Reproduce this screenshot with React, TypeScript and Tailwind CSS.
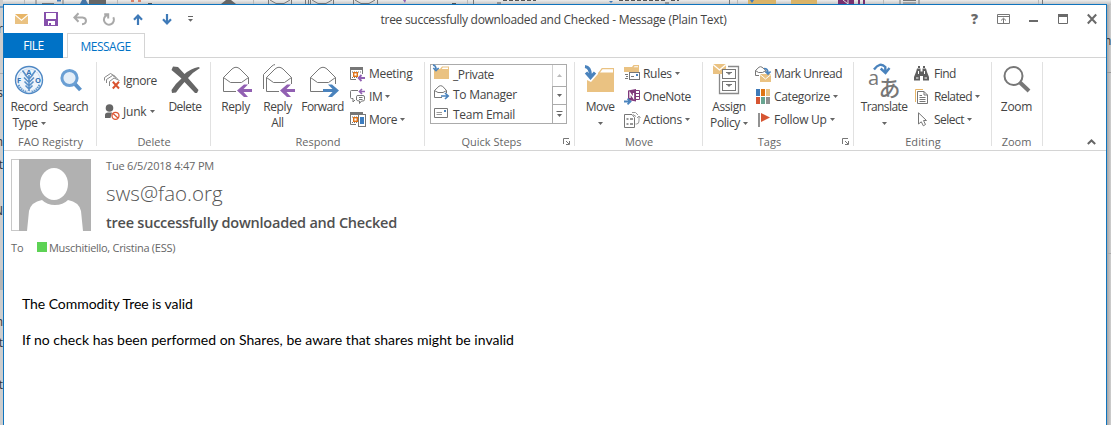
import React, { type ReactNode } from "react";
import clsx from "clsx";

const BLUE = "#4a83bd";
const PURPLE = "#9160b2";
const GRAY = "#777777";
const TAN = "#eac282";

function Icon({ w, h, className, children }: { w: number; h: number; className?: string; children: ReactNode }) {
  return (
    <svg width={w} height={h} viewBox={`0 0 ${w} ${h}`} fill="none" className={clsx("block shrink-0 overflow-visible", className)}>
      {children}
    </svg>
  );
}

function Caret({ className }: { className?: string }) {
  return (
    <Icon w={5} h={3} className={className}>
      <path d="M0 0H5L2.5 3Z" fill="#666" />
    </Icon>
  );
}

function Group({ width, label, labelClass, launcher, children }: { width: string; label: string; labelClass?: string; launcher?: boolean; children: ReactNode }) {
  return (
    <section className={clsx("relative flex h-full shrink-0 flex-col", width)}>
      <div className="flex h-[77px] items-start pt-1">{children}</div>
      <div className={clsx("text-center text-[11px] leading-[14px] text-[#666]", labelClass)}>{label}</div>
      {launcher && (
        <Icon w={7} h={7} className="absolute right-[5px] bottom-[5px]">
          <path d="M.5 6V.5H6M3 3L6 6M6.5 3V6.5H3" stroke={GRAY} />
        </Icon>
      )}
      <div className="absolute top-1 right-0 h-[84px] w-px bg-[#e1e1e1]" />
    </section>
  );
}

function Big({ width, icon, label, second, caret, tracking }: { width: string; icon: ReactNode; label: string; second?: string; caret?: boolean; tracking: string }) {
  return (
    <button className={clsx("flex shrink-0 flex-col items-center whitespace-nowrap text-[12px] leading-4 text-[#444]", width, tracking)}>
      <span className="flex h-[37px] items-start justify-center">{icon}</span>
      <span>{label}</span>
      {(second || caret) && (
        <span className="flex h-4 items-center gap-[3px]">
          {second}
          {caret && <Caret />}
        </span>
      )}
    </button>
  );
}

function Small({ icon, label, caret, tracking, height = "h-[23px]" }: { icon: ReactNode; label: string; caret?: boolean; tracking: string; height?: string }) {
  return (
    <button className={clsx("flex shrink-0 items-center whitespace-nowrap text-[12px] leading-4 text-[#444]", height)}>
      <span className="flex w-[19px] shrink-0 items-center">{icon}</span>
      <span className={tracking}>{label}</span>
      {caret && <Caret className="ml-[3px]" />}
    </button>
  );
}

function Envelope({ x = 0 }: { x?: number }) {
  return (
    <g transform={`translate(${x} 0)`} stroke={GRAY} strokeWidth="1">
      <path d="M.5 12.5L9 4Q13 .5 17 4L25.5 12.5V19M.5 12.5V26.5H13M.5 12.5L7.5 17.5H18.5L25.5 12.5" />
    </g>
  );
}

function LeftArrow({ x }: { x: number }) {
  return <path transform={`translate(${x} 0)`} d="M8 19.5H12L7.5 24H16V27H7.5L12 32H8L1 25.5Z" fill={PURPLE} />;
}

function FaoLogo() {
  return (
    <Icon w={30} h={32}>
      <circle cx="15" cy="18" r="13.5" stroke="#4f88c4" strokeWidth="1.4" fill="#eef4fb" />
      <circle cx="15" cy="18" r="11" stroke="#8fb6de" strokeWidth=".8" strokeDasharray="1 1" />
      <path d="M15 13V29M15 17L11 12.5M15 17L19 12.5M15 20.5L10 15.5M15 20.5L20 15.5M15 24L10.5 19.5M15 24L19.5 19.5M15 27L11.5 23.5M15 27L18.5 23.5M8.5 8.5L12.5 14M21.5 8.5L17.5 14" stroke="#5a90c8" strokeWidth="1.6" />
      <text x="3" y="20.5" fontSize="7.5" fontWeight="700" fill="#3674b5" fontFamily="Open Sans">F</text>
      <text x="12.3" y="12.5" fontSize="7.5" fontWeight="700" fill="#3674b5" fontFamily="Open Sans">A</text>
      <text x="21" y="20.5" fontSize="7.5" fontWeight="700" fill="#3674b5" fontFamily="Open Sans">O</text>
      <path d="M4.5 23Q8 29.5 13 30M25.5 23Q22 29.5 17 30" stroke="#5f95cb" strokeWidth="2" strokeDasharray="1.4 .8" />
    </Icon>
  );
}

function CalendarGlyph() {
  return (
    <>
      <path d="M0 0H13V3H0Z" fill={GRAY} />
      <path d="M.5 3V12.5H6M12.5 3V7" stroke={GRAY} />
      <path d="M2 5H12M2 10.5H8" stroke={GRAY} strokeDasharray="1 1" />
      <rect x="3.7" y="5.7" width="3.6" height="3.6" stroke="#e07318" strokeWidth="1.4" />
    </>
  );
}

function MiniEnvelope() {
  return <path d="M.5 5.5L5 1.2Q6.5 .2 8.5 1.2L12.5 5.5V8M.5 5.5V12.5H8M.5 5.5L4 7.5H9L12.5 5.5" stroke={GRAY} />;
}

function QuickAccess() {
  return (
    <div className="flex items-center pl-[11px]">
      <Icon w={13} h={10}>
        <path d="M0 0H13L6.5 5.5Z" fill="#e8b566" />
        <path d="M0 1.6L6.5 7L13 1.6V10H0Z" fill={TAN} />
      </Icon>
      <Icon w={14} h={14} className="ml-4">
        <path fillRule="evenodd" d="M0 0H14V14H0ZM2 1V7H12V1ZM4 9V13H5V11H7V13H11V9Z" fill="#8650ab" />
      </Icon>
      <Icon w={14} h={12} className="ml-[15px]">
        <path d="M5.5 .2L1.4 4.5L5.5 8.8M1.5 4.5H9.5Q13 4.8 13 8Q12.7 11 9 11.2" stroke="#a9a9a9" strokeWidth="2" />
      </Icon>
      <Icon w={13} h={13} className="ml-[15px]">
        <path d="M5 2A5 5 0 1 0 11.3 4.2M2.2 1.2H6.2V5.5" stroke="#a9a9a9" strokeWidth="2" />
      </Icon>
      <Icon w={10} h={11} className="ml-[18px]">
        <path d="M5 11V1.5M1 5.8L5 1.6L9 5.8" stroke="#3f7ab8" strokeWidth="2.2" />
      </Icon>
      <Icon w={10} h={11} className="ml-[19px]">
        <path d="M5 0V9.5M1 5.2L5 9.4L9 5.2" stroke="#3f7ab8" strokeWidth="2.2" />
      </Icon>
      <Icon w={5} h={6} className="ml-4">
        <path d="M0 .5H5" stroke="#666" />
        <path d="M0 3H5L2.5 5.7Z" fill="#666" />
      </Icon>
    </div>
  );
}

function WindowButtons() {
  return (
    <div className="flex items-center pr-[9px]">
      <span className="mr-[19px] text-[14px] leading-4 font-extrabold text-[#6a6a6a]">?</span>
      <Icon w={13} h={10} className="mr-[19px]">
        <path d="M.5 .5H12.5V9.5H.5ZM.5 2.5H12.5M6.5 9V4.5M4 6.5L6.5 4.2L9 6.5" stroke="#777" />
      </Icon>
      <Icon w={9} h={10} className="mr-5">
        <path d="M0 7H9" stroke="#6a6a6a" strokeWidth="2" />
      </Icon>
      <Icon w={10} h={10} className="mr-[19px]">
        <path d="M.5 1V9.5H9.5V1" stroke="#6a6a6a" />
        <path d="M0 0H10V3H0Z" fill="#6a6a6a" />
      </Icon>
      <Icon w={10} h={10}>
        <path d="M.8 .5L9.2 9.5M9.2 .5L.8 9.5" stroke="#6a6a6a" strokeWidth="2" />
      </Icon>
    </div>
  );
}

function Gallery() {
  return (
    <div className="mt-[2px] ml-[5px] flex h-[60px] w-[137px] border border-[#ababab]">
      <div className="flex flex-1 flex-col pl-[2px]">
        <Small height="h-5" label="_Private" tracking="ml-[1px] tracking-[-0.4px]" icon={
          <Icon w={16} h={14} className="-mt-[6px]">
            <path d="M1 4H7L9 1.5H16V14H1Z" fill={TAN} />
            <path d="M9.8 2.5H15V4H8.7Z" fill="#fff" />
            <path d="M0 0Q3 .5 3 4M.3 3L3 5.6L5.7 3" stroke={BLUE} strokeWidth="1.6" />
          </Icon>
        } />
        <Small height="h-[19px]" label="To Manager" tracking="ml-[1px] tracking-[-0.27px]" icon={
          <Icon w={16} h={14} className="-mt-[5px] ml-[1px]">
            <MiniEnvelope />
            <path d="M7 11H14M11 8L14.2 11L11 14" stroke={BLUE} strokeWidth="1.7" />
          </Icon>
        } />
        <Small height="h-[21px]" label="Team Email" tracking="ml-[1px] tracking-[-0.27px]" icon={
          <Icon w={14} h={10} className="-mt-[4px] ml-[1px]">
            <path d="M.5 .5H13.5V9.5H.5Z" stroke={GRAY} />
            <path d="M2.5 4.5H8M2.5 6.5H8" stroke="#999" />
            <path d="M10 2H12V4H10Z" fill={BLUE} />
          </Icon>
        } />
      </div>
      <div className="flex w-[14px] flex-col">
        <span className="flex h-[21px] items-center justify-center border-l border-[#d0d0d0]">
          <Icon w={5} h={3}><path d="M0 3H5L2.5 0Z" fill="#bbb" /></Icon>
        </span>
        <span className="flex h-[19px] items-center justify-center border-y border-l border-[#ababab]"><Caret /></span>
        <span className="flex h-[18px] items-center justify-center border-l border-[#ababab]">
          <Icon w={5} h={6}>
            <path d="M-.5 .5H5.5" stroke="#666" />
            <path d="M0 3H5L2.5 6Z" fill="#666" />
          </Icon>
        </span>
      </div>
    </div>
  );
}

function Ribbon() {
  return (
    <div className="relative flex h-[93px] border-b border-[#d4d4d4]">
      <Group width="w-[93px]" label="FAO Registry">
        <div className="ml-[5px] flex">
          <Big width="w-10" label="Record" second="Type" caret tracking="tracking-[-0.4px]" icon={<FaoLogo />} />
          <Big width="w-[43px]" label="Search" tracking="tracking-[-0.5px]" icon={
            <Icon w={22} h={32}>
              <path d="M14 21L20.5 28" stroke="#5a92ca" strokeWidth="4" />
              <circle cx="9.5" cy="16" r="7.6" stroke="#6a9fd4" strokeWidth="3" fill="#e4eef8" />
            </Icon>
          } />
        </div>
      </Group>

      <Group width="w-[114px]" label="Delete">
        <div className="ml-[7px] flex w-[58px] shrink-0 flex-col pt-[3px]">
          <Small height="h-[31px]" label="Ignore" tracking="tracking-[-0.35px]" icon={
            <Icon w={16} h={16}>
              <path d="M.5 7.5V4.5L6.5 .5L11.5 3.5M2.5 10V6.5L8.5 2.5L13.5 5.5M5.5 13V8.5L10 5L15.5 7.5" stroke="#888" />
              <path d="M8.8 8.8L15 15.5M15 8.8L8.8 15.5" stroke="#d9532f" strokeWidth="2" />
            </Icon>
          } />
          <Small height="h-[31px]" label="Junk" caret tracking="mr-[1px] tracking-[-0.2px]" icon={
            <Icon w={16} h={16}>
              <circle cx="5.5" cy="4" r="3.8" fill="#666" />
              <path d="M1 14V11Q1 8.5 4 8.5H8L6.5 14Z" fill="#666" />
              <circle cx="11.5" cy="11.8" r="3.5" stroke="#dd5836" strokeWidth="1.3" fill="#fff" />
              <path d="M9 9.5L14 14" stroke="#dd5836" strokeWidth="1.3" />
            </Icon>
          } />
        </div>
        <Big width="w-[46px]" label="Delete" tracking="tracking-[-0.5px]" icon={
          <Icon w={29} h={32}>
            <path d="M2 4.5L7 5L13.5 12Q20 6.5 27.5 5L29 6Q22 10 17 16L27.5 28L26 31H24L13.5 20Q8 26 5 30.5L1 31L.5 28Q5 21 10.5 16.5L.5 8Z" fill="#666" />
          </Icon>
        } />
      </Group>

      <Group width="w-[214px]" label="Respond">
        <div className="ml-[3px] flex">
          <Big width="w-[43px]" label="Reply" tracking="tracking-[-0.4px]" icon={<Icon w={26} h={32} className="mt-[3px]"><Envelope /><LeftArrow x={13} /></Icon>} />
          <Big width="w-[41px]" label="Reply" second="All" tracking="tracking-[-0.4px]" icon={
            <Icon w={30} h={32} className="mt-[3px]">
              <path d="M.5 24V9.5L9 1Q10.5 -.3 12 -.4" stroke={GRAY} />
              <Envelope x={3} />
              <LeftArrow x={16} />
            </Icon>
          } />
          <Big width="w-[49px]" label="Forward" tracking="tracking-[-0.6px]" icon={
            <Icon w={26} h={32} className="mt-[3px]">
              <Envelope />
              <path d="M22 19.5H18L22.5 24H13V27H22.5L18 32H22L29 25.5Z" fill={BLUE} />
            </Icon>
          } />
        </div>
        <div className="ml-[3px] flex shrink-0 flex-col">
          <Small label="Meeting" tracking="tracking-[-0.3px]" icon={
            <Icon w={15} h={14}>
              <CalendarGlyph />
              <path d="M15 11H9M11.5 8L8.6 11L11.5 14" stroke={PURPLE} strokeWidth="1.8" />
            </Icon>
          } />
          <Small label="IM" caret tracking="tracking-[-0.4px]" icon={
            <Icon w={15} h={15}>
              <path d="M8 1.5H1.5Q.5 1.5 .5 2.5V8.5Q.5 9.5 1.5 9.5H3V13L5 11M6.5 11V7.5Q6.5 6.5 8 6.5H13Q14.5 6.5 14.5 8V10.5Q14.5 12 13 12H11.5L9.5 14.5V12Q6.5 12 6.5 10.5M9 8.5H12.5M9 10.5H12.5" stroke={GRAY} />
              <path d="M15 2.5H10M12 0L9.5 2.5L12 5" stroke={PURPLE} strokeWidth="1.6" />
            </Icon>
          } />
          <Small label="More" caret tracking="tracking-[-0.4px]" icon={
            <Icon w={16} h={15}>
              <CalendarGlyph />
              <rect x="8.5" y="2.5" width="7" height="12" stroke={GRAY} fill="#fff" />
              <path d="M10 5H14V12H10Z" fill="#3c7dc0" />
            </Icon>
          } />
        </div>
      </Group>

      <Group width="w-[150px]" label="Quick Steps" labelClass="pr-[17px]" launcher>
        <Gallery />
      </Group>

      <Group width="w-[128px]" label="Move">
        <Big width="ml-[5px] w-[40px]" label="Move" caret tracking="tracking-[-0.5px]" icon={
          <Icon w={29} h={31} className="-ml-[2px]">
            <path d="M2 18L6 20L13 12V10.5H13.5L16.8 6H29V30H2Z" fill={TAN} />
            <path d="M15 10.5L17.5 7.2H28V10.5Z" fill="#fff" />
            <path d="M0 4.5Q5.5 5 5.5 14M1 10.5L5.5 15.5L10 10.5" stroke={BLUE} strokeWidth="3.2" />
          </Icon>
        } />
        <div className="ml-1 flex shrink-0 flex-col">
          <Small label="Rules" caret tracking="tracking-[-0.3px]" icon={
            <Icon w={16} h={15} className="-mt-[3px]">
              <path d="M0 2H8L9.5 0H15V7H0Z" fill={TAN} />
              <path d="M10.5 1.2H14V2.2H9.7Z" fill="#fff" />
              <rect x="5.5" y="7.5" width="10" height="7" fill="#fff" stroke={GRAY} />
              <path d="M1 9.5H4M2 11.5H4M1 13.5H4M7 11.5H10" stroke={GRAY} />
              <path d="M12 9H14V11H12Z" fill={BLUE} />
            </Icon>
          } />
          <Small label="OneNote" tracking="tracking-[-0.4px]" icon={
            <Icon w={16} h={16}>
              <path d="M4 1.5L12 0V12.5L4 11Z" fill="#80397b" />
              <path d="M12 1.5H15.5V10.5H12M12 4.5H15M12 7.5H15" stroke="#80397b" />
              <path d="M6 9V4L9.5 9V4" stroke="#fff" strokeWidth="1.3" />
              <path d="M0 12.5H6M3.5 9.7L6.5 12.5L3.5 15.3" stroke={BLUE} strokeWidth="1.8" />
            </Icon>
          } />
          <Small label="Actions" caret tracking="tracking-[-0.3px]" icon={
            <Icon w={16} h={16}>
              <path d="M.5 2.5H8L10.5 5.5V15.5H.5Z" stroke={GRAY} fill="#fff" />
              <path d="M2.5 7H4.5M6 7H9M2.5 12H4.5M6 12H9" stroke={GRAY} strokeWidth="1.6" />
              <path d="M8 .5H11.5L14 3M9 2.5L12 4.5M11.5 12H12.5Q15 12 15 9V4.5M13 6L15 4L16.5 6" stroke="#999" />
            </Icon>
          } />
        </div>
      </Group>

      <Group width="w-[151px]" label="Tags" labelClass="pr-[18px]" launcher>
        <Big width="ml-[3px] w-[46px]" label="Assign" second="Policy" caret tracking="tracking-[-0.4px]" icon={
          <Icon w={32} h={32} className="-ml-[1px]">
            <path d="M0 2H13V12H0Z" fill={TAN} />
            <path d="M0 2.5L6.5 8L13 2.5" stroke="#fff" strokeWidth="1.3" />
            <path d="M6.5 12V31.5H25.5V4.5H15" stroke="#8a8a8a" strokeWidth="1.3" />
            <rect x="9.5" y="7.5" width="13" height="9" stroke="#777" fill="#fff" />
            <rect x="9.5" y="19.5" width="13" height="9" stroke="#777" fill="#fff" />
            <path d="M13 10.5H19M13 22.5H19" stroke="#777" />
            <path d="M14 11H18L16 13ZM14 23H18L16 25Z" fill="#777" />
          </Icon>
        } />
        <div className="ml-[3px] flex shrink-0 flex-col">
          <Small label="Mark Unread" tracking="tracking-[-0.5px]" icon={
            <Icon w={16} h={16}>
              <path d="M.5 4.5L4 1.2Q5.5 .2 7 1.2L11 4.5V7M.5 4.5V9.5H4M.5 4.5L3.5 6.5H7.5L11 4.5" stroke={GRAY} />
              <path d="M5 8H16V16H5Z" fill={TAN} />
              <path d="M5 8.5L10.5 13L16 8.5" stroke="#fff" />
              <path d="M9 2.5Q13 2.5 13 7M10.5 5.5L13 8L15.6 5.5" stroke={BLUE} strokeWidth="1.7" />
            </Icon>
          } />
          <Small label="Categorize" caret tracking="tracking-[-0.35px]" icon={
            <Icon w={15} h={15} className="ml-[1px]">
              <path d="M0 0H4V7H0Z" fill="#3e7ab8" />
              <path d="M5 0H9V7H5Z" fill="#df7414" />
              <path d="M10 0H14V7H10Z" fill="#eac282" />
              <path d="M0 8H4V15H0Z" fill="#d65532" />
              <path d="M5 8H9V15H5Z" fill="#68a490" />
              <path d="M10 8H14V15H10Z" fill="#909090" />
            </Icon>
          } />
          <Small label="Follow Up" caret tracking="tracking-[-0.3px]" icon={
            <Icon w={12} h={14} className="ml-[3px]">
              <path d="M1 0V14" stroke={GRAY} strokeWidth="1.6" />
              <path d="M3 0L12 4.5L3 9Z" fill="#d65532" />
            </Icon>
          } />
        </div>
      </Group>

      <Group width="w-[138px]" label="Editing" labelClass="tracking-[0.1px]">
        <Big width="ml-[4px] w-[52px]" label="Translate" caret tracking="tracking-[-0.6px]" icon={
          <Icon w={32} h={34}>
            <text x="0" y="23" fontSize="20" fill="#777" fontFamily="Open Sans">a</text>
            <text x="10.5" y="33.5" fontSize="22" fontWeight="500" fill="#777" fontFamily="Noto Sans CJK JP">あ</text>
            <path d="M6 7.5Q12 -.5 17.3 5V10M12.7 6.5L17.5 11L21.5 6" stroke={BLUE} strokeWidth="2.4" />
          </Icon>
        } />
        <div className="ml-1 flex shrink-0 flex-col">
          <Small label="Find" tracking="ml-[1px] tracking-[-0.5px]" icon={
            <Icon w={15} h={14}>
              <path d="M3 1.5H6.5V4.5H8.5V1.5H12L13 5L15 10V13.5H9V9H6V13.5H0V10L2 5Z" fill="#5f5f5f" />
              <path d="M4 0H6M9 0H11" stroke="#5f5f5f" strokeWidth="2" />
              <path d="M4.5 4V7M10.5 4V7M2 11H4.5M10.5 11H13" stroke="#fff" />
            </Icon>
          } />
          <Small label="Related" caret tracking="ml-[1px] tracking-[-0.6px]" icon={
            <Icon w={13} h={15} className="ml-[1px]">
              <path d="M.5 13V.5H8" stroke="#e8b566" />
              <path d="M2.5 2.5H9L12.5 6V14.5H2.5ZM9 2.5V6H12.5M4.5 8.5H10.5M4.5 10.5H10.5M4.5 12.5H10.5M4.5 6.5H7" stroke={GRAY} fill="#fff" />
            </Icon>
          } />
          <Small label="Select" caret tracking="ml-[1px] tracking-[-0.5px]" icon={
            <Icon w={10} h={15} className="ml-1">
              <path d="M.5 .8L8.5 8.5H5.5L7.5 12.5L5.3 13.8L3.3 9.8L.5 12Z" stroke={GRAY} />
            </Icon>
          } />
        </div>
      </Group>

      <Group width="w-[51px]" label="Zoom" labelClass="pr-[2px]">
        <Big width="w-[49px]" label="Zoom" tracking="tracking-[-0.25px]" icon={
          <Icon w={28} h={32}>
            <circle cx="10.5" cy="14" r="9" stroke="#777" strokeWidth="2" />
            <path d="M17 20.5L26 29" stroke="#777" strokeWidth="4" />
          </Icon>
        } />
      </Group>

      <Icon w={9} h={6} className="absolute right-[10px] bottom-[5px]">
        <path d="M.8 5L4.5 1.5L8.2 5" stroke="#666" strokeWidth="2" />
      </Icon>
    </div>
  );
}

function Header() {
  return (
    <div className="flex flex-col pl-[7px]">
      <div className="flex h-20 pt-2">
        <div className="flex h-[72px] w-20 shrink-0">
          <div className="w-2 border border-r-0 border-[#c8c8c8]" />
          <Icon w={72} h={72}>
            <path d="M0 0H72V72H0Z" fill="#b1b1b1" />
            <ellipse cx="35" cy="25" rx="14" ry="16" fill="#fff" />
            <path d="M8 72L10 52Q12 43 23 41Q28 46 36 46Q44 46 49 41Q60 43 62 52L64 72Z" fill="#fff" />
          </Icon>
        </div>
        <div className="ml-[15px] flex flex-col">
          <span className="text-[11px] leading-[14px] tracking-[-0.18px] text-[#666]">Tue 6/5/2018 4:47 PM</span>
          <span className="mt-[6px] text-[20.5px] leading-[28px] font-light text-[#555]">sws@fao.org</span>
          <span className="mt-[6px] text-[14.5px] leading-[20px] font-semibold tracking-[-0.23px] text-[#505050]">tree successfully downloaded and Checked</span>
        </div>
      </div>
      <div className="mt-[10px] flex h-[14px] items-center text-[11px] leading-[14px] text-[#666]">
        <span className="w-[26px]">To</span>
        <span className="-mt-[2px] size-[10px] bg-[#5dd255]" />
        <span className="ml-[2px] tracking-[-0.28px]">Muschitiello, Cristina (ESS)</span>
      </div>
    </div>
  );
}

const edgeMarks = [
  { t: "r", gap: "mt-[17px]" },
  { t: "s", gap: "mt-[48px]" },
  { t: "n", gap: "mt-[33px]" },
  { t: "t", gap: "mt-[7px]" },
  { t: "N", gap: "mt-[30px]" },
  { t: "n", gap: "mt-[95px]" },
  { t: "t", gap: "mt-[5px]" },
  { t: "t", gap: "mt-[26px]" },
];

function Backdrop() {
  return (
    <div aria-hidden="true" className="absolute inset-0 overflow-hidden bg-[#cfcfcf]">
      <svg width="1111" height="5" viewBox="0 0 1111 5" fill="none" className="absolute top-0 left-0">
        <defs>
          <linearGradient id="edge" x1="0" y1="0" x2="0" y2="1">
            <stop offset="0" stopColor="#ececec" />
            <stop offset="1" stopColor="#bdbdbd" />
          </linearGradient>
        </defs>
        <path d="M0 0H1111V5H0Z" fill="url(#edge)" />
        <path d="M24.5 0V4M117.5 0V4M253.5 0V4M467.5 0V4M737.5 0V4M883.5 0V4M1038.5 0V4" stroke="#b8b8b8" />
        <path d="M36 0V4M63 0V4M42 3.5H54M305.5 0V4M308.5 0V4M473.5 0V4M729.5 0V4M900 0V4M919 0V4M903 .5H916M903 3H916M1042.5 0V4" stroke="#777" />
        <path d="M268.5 0V4M291.5 0V4M310.5 0V4M333.5 0V4M353.5 0V4M377.5 0V4M270 0L276 3.5H284L290 0M312 0L318 3.5H326L332 0M355 0L361 3.5H369L375 0" stroke="#777" />
        <path d="M80 4L82 0H86L88 4Z" fill="#4675a5" />
        <path d="M89 0H106V4H89ZM221 4L226 0H231L236 4Z" fill="#666" />
        <path d="M131 0H134V2H131ZM138 0H141V2H138Z" fill="#d98068" />
        <path d="M748 0H776V4H748ZM791 0H817V4H791Z" fill="#dab468" />
        <path d="M838 0H854V4H838ZM858 0H860V4H858ZM863 0H865V4H863Z" fill="#77306f" />
        <path d="M843 0L848 4V0" stroke="#ddd" />
        <path d="M57 0H61V1.5H57ZM609 1H613L611 3ZM750 0H754L752 3Z" fill="#3f7ab8" />
        <path d="M403 0H406L405 3Z" fill={PURPLE} />
        <path d="M148 3.5H152M452 3.5H456M497 3H501M503 .5H536M619 .5H665M665 3H670M671 .5H679" stroke="#555" strokeDasharray="4 2" />
      </svg>
      <div className="absolute top-0 left-0 h-full w-[3px] overflow-hidden bg-[#cdcdcd] text-[12px] leading-[16px] text-[#333]">
        <div className="flex flex-col pt-1">
          {edgeMarks.map((m, i) => (
            <span key={i} className={clsx("flex w-[3px] justify-end overflow-hidden", m.gap)}>{m.t}</span>
          ))}
        </div>
        <div className="absolute top-[270px] left-0 h-5 w-full bg-[#b5b5b5]" />
        <div className="absolute top-[73px] left-0 h-px w-full bg-[#aaa]" />
        <div className="absolute -top-2 -left-[7px] size-4 rounded-full border-2 border-[#6f9bc6]" />
      </div>
      <div className="absolute top-[5px] right-0 h-full w-1 bg-linear-to-r from-[#a5a5a5] to-[#cfcfcf]">
        <div className="mt-[29px] w-1 overflow-hidden text-[12px] leading-[14px] text-[#333]">
          <span className="-ml-[3px]">n</span>
        </div>
        <div className="absolute top-[67px] h-px w-full bg-[#999]" />
        <div className="absolute top-[248px] h-px w-full bg-[#aaa]" />
      </div>
    </div>
  );
}

export default function App() {
  return (
    <div className="relative h-[425px] w-[1111px] overflow-hidden font-['Open_Sans','Noto_Sans_CJK_JP',sans-serif]">
      <Backdrop />
      <main className="relative mt-1 ml-[3px] h-[421px] w-[1104px] border border-b-0 border-[#0f74be] bg-white">
        <div className="flex h-[28px] items-center justify-between">
          <div className="w-[240px]"><QuickAccess /></div>
          <h1 className="mt-[2px] mr-[3px] text-[12px] leading-4 font-normal tracking-[-0.28px] whitespace-nowrap text-[#444]">
            tree successfully downloaded and Checked - Message (Plain Text)
          </h1>
          <div className="flex w-[240px] justify-end"><WindowButtons /></div>
        </div>
        <nav className="relative flex h-[25px] text-[12px] leading-[24px]">
          <button className="w-[59px] bg-[#0072c6] tracking-[-0.5px] text-white">FILE</button>
          <div className="w-1 border-b border-[#d4d4d4]" />
          <button className="w-[78px] border border-b-0 border-[#d4d4d4] pr-[1px] leading-[23px] tracking-[-0.48px] text-[#0072c6]">MESSAGE</button>
          <div className="flex-1 border-b border-[#d4d4d4]" />
        </nav>
        <Ribbon />
        <Header />
        <article className="mt-10 flex flex-col gap-[18px] pl-[18px] font-[Lato,sans-serif] text-[14px] leading-[18px] text-black">
          <p className="tracking-[-0.06px]">The Commodity Tree is valid</p>
          <p className="tracking-[0.01px]">If no check has been performed on Shares, be aware that shares might be invalid</p>
        </article>
      </main>
    </div>
  );
}
